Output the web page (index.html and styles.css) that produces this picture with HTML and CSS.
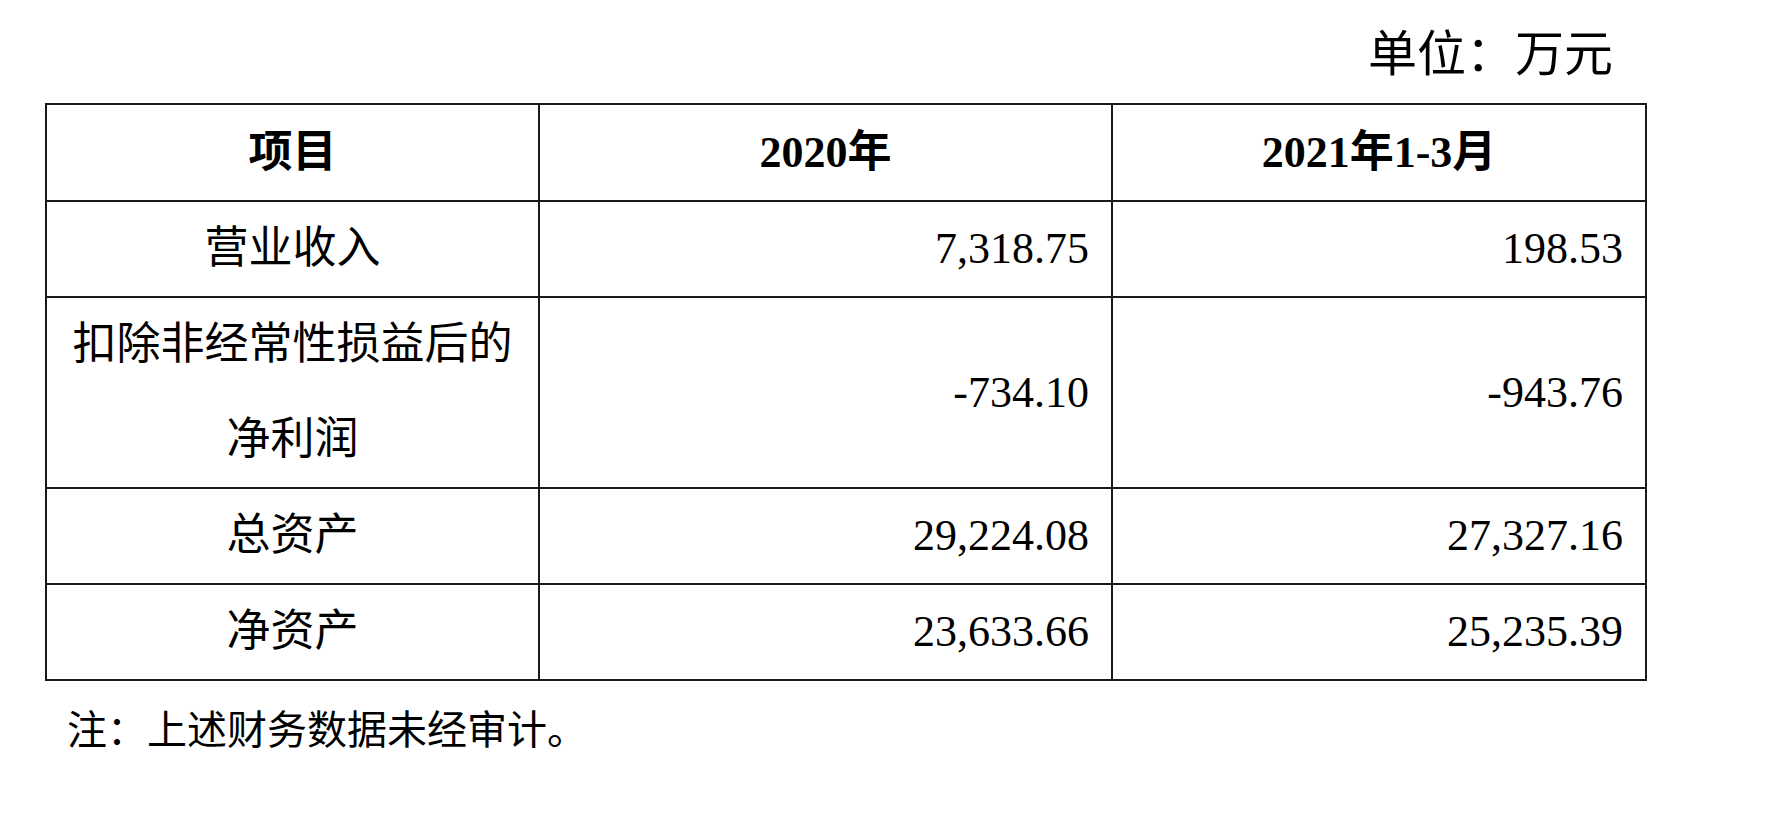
FILE: index.html
```html
<!DOCTYPE html>
<html lang="zh-CN">
<head>
<meta charset="utf-8">
<title>财务数据</title>
<link rel="stylesheet" href="styles.css">
</head>
<body>
<div class="page">
  <div class="unit">单位：万元</div>
  <table class="fin">
    <colgroup>
      <col class="c-item">
      <col class="c-y2020">
      <col class="c-y2021">
    </colgroup>
    <thead>
      <tr>
        <th class="item">项目</th>
        <th>2020年</th>
        <th>2021年1-3月</th>
      </tr>
    </thead>
    <tbody>
      <tr>
        <td class="item">营业收入</td>
        <td class="num">7,318.75</td>
        <td class="num">198.53</td>
      </tr>
      <tr class="tall">
        <td class="item">扣除非经常性损益后的净利润</td>
        <td class="num">-734.10</td>
        <td class="num">-943.76</td>
      </tr>
      <tr>
        <td class="item">总资产</td>
        <td class="num">29,224.08</td>
        <td class="num">27,327.16</td>
      </tr>
      <tr>
        <td class="item">净资产</td>
        <td class="num">23,633.66</td>
        <td class="num">25,235.39</td>
      </tr>
    </tbody>
  </table>
  <p class="note">注：上述财务数据未经审计。</p>
</div>
</body>
</html>
```

FILE: styles.css
```css
html, body {
  margin: 0;
  padding: 0;
  background: #ffffff;
}

body {
  color: #000000;
  font-family: "Liberation Serif", "Noto Sans CJK SC", serif;
}

.page {
  width: 1792px;
  height: 820px;
  padding-left: 45px;
  box-sizing: border-box;
}

.unit {
  width: 1600px;
  box-sizing: border-box;
  padding-top: 25px;
  padding-right: 32px;
  height: 103px;
  text-align: right;
  font-size: 49px;
  line-height: 60px;
}

.fin {
  border-collapse: collapse;
  table-layout: fixed;
  width: 1600px;
  border: 2px solid #1a1a1a;
}

.c-item { width: 493px; }
.c-y2020 { width: 573px; }
.c-y2021 { width: 534px; }

.fin th,
.fin td {
  border: 2px solid #1a1a1a;
  padding: 0;
  font-size: 44px;
  line-height: 94px;
  height: 94px;
  vertical-align: middle;
}

.fin th {
  font-weight: bold;
  text-align: center;
  line-height: 95px;
  height: 95px;
}

.fin td.item {
  text-align: center;
  padding: 0 18px;
}

.fin td.num {
  text-align: right;
  padding-right: 22px;
  font-size: 44px;
}

.fin tr.tall td {
  height: 189px;
}

.fin tr.tall td.item {
  line-height: 94.5px;
}

.note {
  margin: 0;
  padding-top: 28px;
  padding-left: 22px;
  font-size: 40px;
  line-height: 44px;
}
```
